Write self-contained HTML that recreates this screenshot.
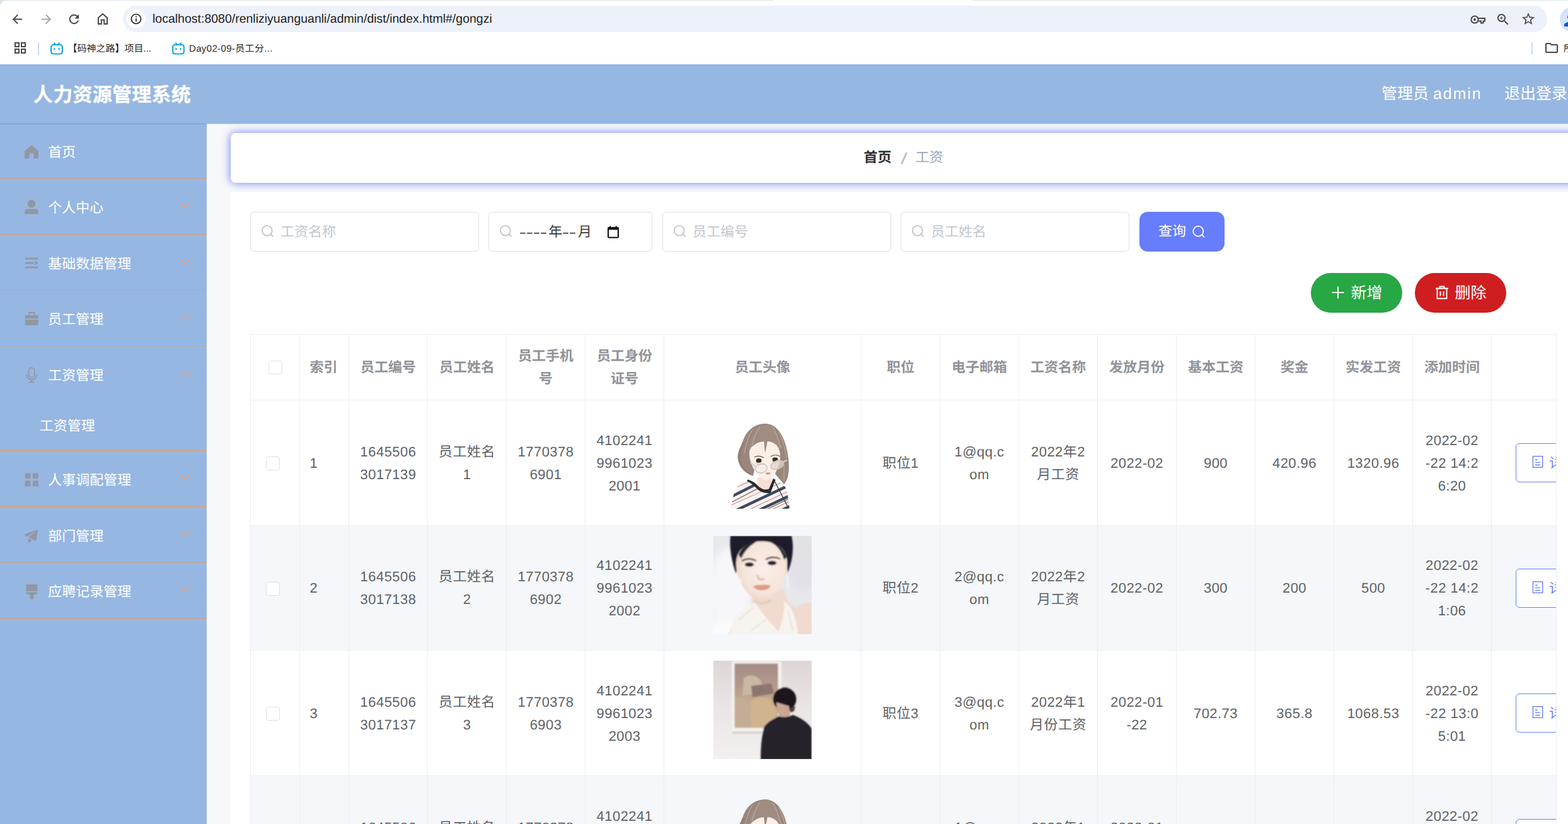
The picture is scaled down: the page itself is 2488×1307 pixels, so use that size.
<!DOCTYPE html>
<html lang="zh">
<head>
<meta charset="utf-8">
<title>人力资源管理系统</title>
<style>
*{box-sizing:border-box;margin:0;padding:0}
html,body{width:2488px;height:1307px;overflow:hidden;background:#fff}
body{position:relative;font-family:"Liberation Sans","Noto Sans CJK SC",sans-serif;color:#606266;text-rendering:geometricPrecision}
.abs{position:absolute}
.nw{white-space:nowrap}
/* ---------- browser chrome ---------- */
#chrome{position:absolute;left:0;top:0;width:2488px;height:102px;background:#dde2e9}
#chrome .tl1{position:absolute;left:0;top:1px;width:2488px;height:101px;background:#fff;border-top-left-radius:10px}
#chrome .tl2{position:absolute;left:1228px;top:0;width:315px;height:2px;background:#fff}
#omni{position:absolute;left:195px;top:9px;width:2260px;height:42px;border-radius:21px;background:#edf1fa}
#omni .ic{position:absolute;left:6px;top:6px;width:30px;height:30px;border-radius:15px;background:#fff}
#url{position:absolute;left:242px;top:18px;font-size:19.5px;line-height:24px;color:#1f1f1f;white-space:nowrap}
.bm{position:absolute;top:68px;font-size:15px;line-height:20px;color:#1f1f1f;white-space:nowrap}
/* ---------- app header ---------- */
#hdr{position:absolute;left:0;top:102px;width:2488px;height:94px;background:#96b7e2}
#hdr .title{position:absolute;left:53px;top:29px;font-size:31px;line-height:40px;font-weight:bold;color:#fff;white-space:nowrap;letter-spacing:0.25px;-webkit-text-stroke:0.3px #fff}
#hdr .user{position:absolute;left:2192px;top:28px;font-size:25px;line-height:38px;color:#fff;white-space:nowrap}
#hdr .out{position:absolute;left:2387px;top:28px;font-size:25px;line-height:38px;color:#fff;white-space:nowrap}
/* ---------- sidebar ---------- */
#side{position:absolute;left:0;top:196px;width:328px;height:1111px;background:#96b7e2;border-top:1px solid #7f98c5}
.mi{position:absolute;left:0;width:328px;height:88px;color:#fff;font-size:22px}
.mi .t{position:absolute;left:76.2px;top:30.7px;line-height:28px;white-space:nowrap}
.mi svg.i{overflow:visible;position:absolute;left:38.5px;top:32.5px;width:22px;height:22px}
.mi svg.c{position:absolute;left:285px;top:34px;width:18px;height:12px}
.ln{position:absolute;left:0;width:328px;height:1.3px;background:#f29a4c}
/* ---------- main ---------- */
#main{position:absolute;left:328px;top:196px;width:2160px;height:1111px;background:#f7f8fa;border-top:1px solid #d4d6dc}

#bc{position:absolute;left:38px;top:14px;width:2200px;height:79px;background:#fff;border-radius:8px;box-shadow:0 0 13px 1px rgba(100,115,250,.85)}
#bc .a{position:absolute;left:1004.5px;top:24.2px;font-size:22px;line-height:30px;font-weight:bold;color:#303133;white-space:nowrap}
#bc .s{position:absolute;left:1064.5px;top:25.8px;font-size:25px;line-height:30px;color:#bcc0c9;white-space:nowrap;transform:scale(1.6,1)}
#bc .b{position:absolute;left:1086.5px;top:24.2px;font-size:22px;line-height:30px;color:#97a8be;white-space:nowrap}
#card{position:absolute;left:38px;top:108px;width:2200px;height:1100px;background:#fff}
.inp{position:absolute;top:336px;height:63px;border:1.5px solid #dcdfe6;border-radius:6px;background:#fff}
.inp svg.q{position:absolute;left:15.6px;top:19.4px;width:20.6px;height:20.6px}
.inp .ph{position:absolute;left:47px;top:16px;font-size:22px;line-height:30px;color:#c3c6cd;white-space:nowrap}
.btn{position:absolute;color:#fff;white-space:nowrap}

#tb{position:absolute;left:397px;top:530px;width:2073px;height:800px;overflow:hidden;border-right:1px solid #ebeef5;border-left:1px solid #ebeef5;border-top:1px solid #ebeef5;font-size:22px;line-height:36px;color:#606266}
.tr{position:absolute;left:0;width:2200px}
.tr.s .td{background:#f5f7fa}
.td{position:absolute;top:0;height:100%;border-right:1px solid #ebeef5;border-bottom:1px solid #ebeef5;background:#fff;display:flex;align-items:center;justify-content:center;text-align:center;white-space:nowrap;letter-spacing:0.45px;padding-top:1.2px}
.th .td{font-weight:bold;color:#909399;letter-spacing:0}
.td.l{justify-content:flex-start;padding-left:15.5px}
.cb{position:absolute;width:22px;height:22px;border:1.5px solid #dcdfe6;border-radius:3.5px;background:#fff}
.av{position:absolute;left:78px;top:15.5px;width:156px;height:156.5px;overflow:hidden}
.ob{position:absolute;left:38px;width:150px;height:62px;border:1px solid #6782fb;border-radius:6px;background:#fff;color:#6782fb;letter-spacing:0}
.z{display:inline-block;white-space:nowrap;letter-spacing:inherit;font-family:"Liberation Sans","Noto Sans CJK SC",sans-serif}
</style>
</head>
<body>
<div id="chrome">
  <div class="tl1"></div><div class="tl2"></div>
  <div id="omni"><div class="ic"></div></div>

  <svg class="abs" style="left:16px;top:18.5px" width="23" height="23" viewBox="0 0 24 24"><path fill="#474747" d="M20 11H7.83l5.59-5.59L12 4l-8 8 8 8 1.41-1.41L7.83 13H20v-2z"/></svg>
  <svg class="abs" style="left:61.5px;top:18.5px" width="23" height="23" viewBox="0 0 24 24"><path fill="#a6a6a6" d="M12 4l-1.41 1.41L16.17 11H4v2h12.17l-5.58 5.59L12 20l8-8z"/></svg>
  <svg class="abs" style="left:106px;top:18.5px" width="23" height="23" viewBox="0 0 24 24"><path fill="#474747" d="M17.65 6.35C16.2 4.9 14.21 4 12 4c-4.42 0-7.99 3.58-7.99 8s3.57 8 7.99 8c3.73 0 6.84-2.55 7.73-6h-2.08c-.82 2.33-3.04 4-5.65 4-3.31 0-6-2.69-6-6s2.69-6 6-6c1.66 0 3.14.69 4.22 1.78L13 11h7V4l-2.35 2.35z"/></svg>
  <svg class="abs" style="left:151px;top:18px" width="24" height="24" viewBox="0 0 24 24"><path fill="none" stroke="#474747" stroke-width="2" stroke-linejoin="miter" d="M5 20V10.3L12 4l7 6.3V20H14.2V13.5H9.8V20Z"/></svg>
  <svg class="abs" style="left:206px;top:20px" width="20" height="20" viewBox="0 0 24 24"><path fill="#1f1f1f" d="M11 7h2v2h-2zm0 4h2v6h-2zm1-9C6.48 2 2 6.48 2 12s4.48 10 10 10 10-4.48 10-10S17.52 2 12 2zm0 18c-4.41 0-8-3.59-8-8s3.59-8 8-8 8 3.59 8 8-3.59 8-8 8z"/></svg>
  <!-- right side omnibox icons -->
  <svg class="abs" style="left:2332px;top:18.6px" width="26" height="24" viewBox="0 0 26 24"><g fill="none" stroke="#474747" stroke-width="2"><circle cx="8" cy="12" r="5.6"/><path d="M13.5 10H24V14.5H21.5V17.5H18V14.5H13.5"/></g><circle cx="8" cy="12" r="2" fill="#474747"/></svg>
  <svg class="abs" style="left:2373px;top:19.2px" width="24" height="24" viewBox="0 0 24 24"><path fill="#474747" d="M15.5 14h-.790l-.280-.270C15.41 12.59 16 11.11 16 9.5 16 5.91 13.09 3 9.5 3S3 5.91 3 9.5 5.91 16 9.5 16c1.61 0 3.09-.590 4.23-1.57l.270.28v.790l5 4.99L20.49 19l-4.99-5zm-6 0C7.01 14 5 11.990 5 9.5S7.01 5 9.5 5 14 7.01 14 9.5 11.990 14 9.500 14zm2.5-4h-2v2H9v-2H7V9h2V7h1v2h2v1z"/></svg>
  <svg class="abs" style="left:2413px;top:18.4px" width="24" height="24" viewBox="0 0 24 24"><path fill="#474747" d="M22 9.24l-7.19-.620L12 2 9.19 8.63 2 9.24l5.46 4.73L5.82 21 12 17.27 18.18 21l-1.63-7.03L22 9.24zM12 15.4l-3.76 2.27 1-4.28-3.32-2.88 4.38-.380L12 6.1l1.71 4.04 4.38.380-3.32 2.88 1 4.28L12 15.4z"/></svg>
  <div class="abs" style="left:2475px;top:11px;width:40px;height:40px;border-radius:20px;background:#d3e3fd"></div>
  <svg class="abs" style="left:2477px;top:17px" width="30" height="30" viewBox="0 0 24 24"><path fill="#0b57d0" d="M12 12c2.21 0 4-1.79 4-4s-1.79-4-4-4-4 1.79-4 4 1.79 4 4 4zm0 2c-2.67 0-8 1.34-8 4v2h16v-2c0-2.66-5.33-4-8-4z"/></svg>
  <!-- bookmarks bar -->
  <svg class="abs" style="left:23px;top:67px" width="18" height="18" viewBox="0 0 18 18"><g fill="none" stroke="#474747" stroke-width="2"><rect x="1" y="1" width="6" height="6"/><rect x="11" y="1" width="6" height="6"/><rect x="1" y="11" width="6" height="6"/><rect x="11" y="11" width="6" height="6"/></g></svg>
  <div class="abs" style="left:60px;top:67px;width:2px;height:20px;border-radius:1px;background:#c7d8f7"></div>
  <svg class="abs" style="left:80px;top:66px" width="20" height="21" viewBox="0 0 20 21"><g fill="none" stroke="#17a8e3" stroke-width="2.2" stroke-linecap="round"><rect x="1.1" y="5" width="17.8" height="14.5" rx="3.5"/><path d="M6 2.5L8 4.8M14 2.5L12 4.8"/></g><rect x="5.3" y="10" width="2.2" height="3.6" rx="1" fill="#17a8e3"/><rect x="12.5" y="10" width="2.2" height="3.6" rx="1" fill="#17a8e3"/></svg>
  <div class="bm" style="left:107.5px"><span class="z" style="width:120px">【码神之路】项目</span>...</div>
  <svg class="abs" style="left:273px;top:66px" width="20" height="21" viewBox="0 0 20 21"><g fill="none" stroke="#17a8e3" stroke-width="2.2" stroke-linecap="round"><rect x="1.1" y="5" width="17.8" height="14.5" rx="3.5"/><path d="M6 2.5L8 4.8M14 2.5L12 4.8"/></g><rect x="5.3" y="10" width="2.2" height="3.6" rx="1" fill="#17a8e3"/><rect x="12.5" y="10" width="2.2" height="3.6" rx="1" fill="#17a8e3"/></svg>
  <div class="bm" style="left:300px;letter-spacing:0.35px">Day02-09-<span class="z" style="width:46.06px">员工分</span>...</div>
  <div class="abs" style="left:2430px;top:67px;width:2px;height:20px;border-radius:1px;background:#c7d8f7"></div>
  <svg class="abs" style="left:2450px;top:64.3px" width="24" height="24" viewBox="0 0 24 24"><path fill="#474747" d="M9.17 6l2 2H20v10H4V6h5.17M10 4H4c-1.1 0-1.99.9-1.99 2L2 18c0 1.1.9 2 2 2h16c1.1 0 2-.900 2-2V8c0-1.1-.900-2-2-2h-8l-2-2z"/></svg>
  <div class="bm" style="left:2481px"><span class="z" style="width:60px">所有书签</span></div>
  <div id="url">localhost:8080/renliziyuanguanli/admin/dist/index.html#/gongzi</div>
</div>
<div id="hdr">
  <div class="title"><span class="z" style="width:250px">人力资源管理系统</span></div>
  <div class="user"><span class="z" style="width:75px">管理员</span> <span style="letter-spacing:1.9px">admin</span></div>
  <div class="out"><span class="z" style="width:100px">退出登录</span></div>
</div>
<div id="side">
  <div class="mi" style="top:0px"><svg class="i" style="top:33px" viewBox="0 0 22 22"><path fill="#9197a3" d="M11 0.3L21.8 9.2V21.5H14.3V13.2H7.7V21.5H0.2V9.2Z"/></svg><span class="t"><span class="z" style="width:44px">首页</span></span></div>
  <div class="mi" style="top:88.4px"><svg class="i" style="top:31.6px" viewBox="0 0 22 22"><circle cx="11" cy="6.3" r="6.3" fill="#9197a3"/><path fill="#9197a3" d="M0.2 22.5V19.5C0.2 16.5 2.2 14.6 5.2 14.6H16.8C19.8 14.6 21.8 16.5 21.8 19.5V22.5Z"/></svg><span class="t"><span class="z" style="width:88px">个人中心</span></span><svg class="c" viewBox="0 0 18 12"><path d="M2 2.5L9 9.5L16 2.5" fill="none" stroke="#f6a273" stroke-width="1.35"/></svg></div>
  <div class="mi" style="top:176.9px"><svg class="i" viewBox="0 0 22 22"><path fill="#9197a3" d="M0.7 2.7H21.6V5.4H0.7ZM0.7 9.7H14.6V12.4H0.7ZM0.7 16.7H21.6V19.5H0.7ZM16.4 7L21.6 10.9L16.4 14.7Z"/></svg><span class="t"><span class="z" style="width:132px">基础数据管理</span></span><svg class="c" viewBox="0 0 18 12"><path d="M2 2.5L9 9.5L16 2.5" fill="none" stroke="#f6a273" stroke-width="1.35"/></svg></div>
  <div class="mi" style="top:265px"><svg class="i" viewBox="0 0 22 22"><path fill="#9197a3" d="M5.9 0.1H16.6V5.1H21.7V10.4H0.7V5.1H5.9ZM7.7 1.9V5.1H14.8V1.9ZM0.7 11.9H21.7V21H0.7Z"/></svg><span class="t"><span class="z" style="width:88px">员工管理</span></span><svg class="c" viewBox="0 0 18 12"><path d="M2 2.5L9 9.5L16 2.5" fill="none" stroke="#f6a273" stroke-width="1.35"/></svg></div>
  <div class="mi" style="top:354.2px"><svg class="i" viewBox="0 0 22 26" style="height:26px;top:30.4px"><g fill="none" stroke="#9197a3" stroke-width="1.8" stroke-linecap="round"><rect x="6.6" y="1.3" width="9.1" height="15.4" rx="4.55"/><path d="M3.4 12.6V13a7.8 7.4 0 0 0 15.6 0V12.6M11.2 20.4V24.3M7.7 24.3H14.7"/></g></svg><span class="t"><span class="z" style="width:88px">工资管理</span></span><svg class="c" viewBox="0 0 18 12"><path d="M2 10.5L9 3.5L16 10.5" fill="none" stroke="#f6a273" stroke-width="1.35"/></svg></div>
  <div class="mi" style="top:520.1px"><svg class="i" viewBox="0 0 22 22"><path fill="#9197a3" d="M0.7 0.4H9.7V9.2H0.7ZM12.9 0.4H21.9V9.2H12.9ZM0.7 12.6H9.7V21.4H0.7ZM12.9 12.6H21.9V21.4H12.9Z"/></svg><span class="t"><span class="z" style="width:132px">人事调配管理</span></span><svg class="c" viewBox="0 0 18 12"><path d="M2 2.5L9 9.5L16 2.5" fill="none" stroke="#f6a273" stroke-width="1.35"/></svg></div>
  <div class="mi" style="top:609px"><svg class="i" viewBox="0 0 22 22"><path fill="#9197a3" d="M21.3 0.5L-0.7 8.9L3.8 11.9L19 2.2ZM21.3 0.8L6.2 12.9L18.1 19.4ZM5.7 15.1L11.4 17.8L5.9 23.2Z"/></svg><span class="t"><span class="z" style="width:88px">部门管理</span></span><svg class="c" viewBox="0 0 18 12"><path d="M2 2.5L9 9.5L16 2.5" fill="none" stroke="#f6a273" stroke-width="1.35"/></svg></div>
  <div class="mi" style="top:697.4px"><svg class="i" viewBox="0 0 22 22"><path fill="#9197a3" d="M2.5 0H20.3V10.7H2.5ZM2.5 12.2H20.3V13C20.3 15 19 16 17 16H14.3V20.5a2.9 2.9 0 0 1-5.8 0V16H5.8C3.8 16 2.5 15 2.5 13Z"/></svg><span class="t"><span class="z" style="width:132px">应聘记录管理</span></span><svg class="c" viewBox="0 0 18 12"><path d="M2 2.5L9 9.5L16 2.5" fill="none" stroke="#f6a273" stroke-width="1.35"/></svg></div>
  <div class="mi" style="top:434px"><span class="t" style="left:62.7px"><span class="z" style="width:88px">工资管理</span></span></div>
  <div class="ln" style="top:84.75px"></div>
  <div class="ln" style="top:173.85px"></div>
  <div class="ln" style="top:261.75px"></div>
  <div class="ln" style="top:350.75px"></div>
  <div class="ln" style="top:516.75px"></div>
  <div class="ln" style="top:605.95px"></div>
  <div class="ln" style="top:693.85px"></div>
  <div class="ln" style="top:782.75px"></div>
</div>
<div id="main">
  <div id="bc"><span class="a"><span class="z" style="width:44px">首页</span></span><span class="s">/</span><span class="b"><span class="z" style="width:44px">工资</span></span></div>
  <div id="card"></div>
</div>
<!-- search form (page coords) -->
<div class="inp" style="left:397px;width:363px"><svg class="q" viewBox="0 0 20 20"><g fill="none" stroke="#c0c4cc" stroke-width="1.8" stroke-linecap="round"><circle cx="9.5" cy="9.5" r="7.7"/><path d="M15.3 15.3L18.3 18.3"/></g></svg><span class="ph"><span class="z" style="width:88px">工资名称</span></span></div>
<div class="inp" style="left:775px;width:260px"><svg class="q" viewBox="0 0 20 20"><g fill="none" stroke="#c0c4cc" stroke-width="1.8" stroke-linecap="round"><circle cx="9.5" cy="9.5" r="7.7"/><path d="M15.3 15.3L18.3 18.3"/></g></svg><span class="ph" style="font-family:'Liberation Serif',serif;color:#3a3a3a;left:48px"><span style="display:inline-block;transform:scaleX(1.5);transform-origin:0 50%;margin-right:17px">----</span><span class="z" style="width:22px">年</span><span style="display:inline-block;transform:scaleX(1.5);transform-origin:0 50%;margin-right:10px">--</span><span class="z" style="width:22px">月</span></span>
  <svg class="abs" style="left:187px;top:20px" width="20" height="22" viewBox="0 0 20 22"><path fill="#111" d="M4.4 1.2H6.2V3H13.8V1.2H15.6V3H17a2 2 0 0 1 2 2V18.8a2 2 0 0 1-2 2H3a2 2 0 0 1-2-2V5a2 2 0 0 1 2-2H4.4ZM3.1 7.6V18.7H16.9V7.6Z"/></svg>
</div>
<div class="inp" style="left:1051px;width:363px"><svg class="q" viewBox="0 0 20 20"><g fill="none" stroke="#c0c4cc" stroke-width="1.8" stroke-linecap="round"><circle cx="9.5" cy="9.5" r="7.7"/><path d="M15.3 15.3L18.3 18.3"/></g></svg><span class="ph"><span class="z" style="width:88px">员工编号</span></span></div>
<div class="inp" style="left:1429px;width:363px"><svg class="q" viewBox="0 0 20 20"><g fill="none" stroke="#c0c4cc" stroke-width="1.8" stroke-linecap="round"><circle cx="9.5" cy="9.5" r="7.7"/><path d="M15.3 15.3L18.3 18.3"/></g></svg><span class="ph"><span class="z" style="width:88px">员工姓名</span></span></div>
<div class="btn" style="left:1808px;top:336px;width:135px;height:63px;border-radius:13px;background:#667dfd">
  <span class="abs" style="left:30px;top:16px;font-size:22px;line-height:30px"><span class="z" style="width:44px">查询</span></span>
  <svg class="abs" style="left:82.5px;top:19.5px" width="22.5" height="22.5" viewBox="0 0 24 24"><g fill="none" stroke="#fff" stroke-width="1.9" stroke-linecap="round"><circle cx="11" cy="11.5" r="8.6"/><path d="M17.5 18L20.8 21.3"/></g></svg>
</div>
<div class="btn" style="left:2080px;top:433px;width:145px;height:63px;border-radius:32px;background:#28a745">
  <svg class="abs" style="left:32px;top:20px" width="22" height="22" viewBox="0 0 22 22"><path d="M11 1.5V20.5M1.5 11H20.5" stroke="#fff" stroke-width="1.9" fill="none"/></svg>
  <span class="abs" style="left:63.5px;top:14.7px;font-size:25px;line-height:34px"><span class="z" style="width:50px">新增</span></span>
</div>
<div class="btn" style="left:2245px;top:433px;width:145px;height:63px;border-radius:32px;background:#cf1e20">
  <svg class="abs" style="left:31px;top:19px" width="24" height="24" viewBox="0 0 24 24"><g fill="none" stroke="#fff" stroke-width="1.9"><path d="M2 5.5H22M8.5 5V2.5H15.5V5M4.5 5.5V21.5H19.5V5.5M9.5 10V17.5M14.5 10V17.5"/></g></svg>
  <span class="abs" style="left:63.5px;top:14.7px;font-size:25px;line-height:34px"><span class="z" style="width:50px">删除</span></span>
</div>
<div id="tb">
<div class="tr th" style="top:0;height:104px"><div class="td" style="left:0px;width:78px"><div class="ci"><span class="cb" style="left:28px;top:41px"></span></div></div><div class="td l" style="left:78px;width:78px"><div class="ci"><span class="z" style="width:44px">索引</span></div></div><div class="td" style="left:156px;width:125px"><div class="ci"><span class="z" style="width:88px">员工编号</span></div></div><div class="td" style="left:281px;width:125px"><div class="ci"><span class="z" style="width:88px">员工姓名</span></div></div><div class="td" style="left:406px;width:125px"><div class="ci"><span class="z" style="width:88px">员工手机</span><br><span class="z" style="width:22px">号</span></div></div><div class="td" style="left:531px;width:125px"><div class="ci"><span class="z" style="width:88px">员工身份</span><br><span class="z" style="width:44px">证号</span></div></div><div class="td" style="left:656px;width:313px"><div class="ci"><span class="z" style="width:88px">员工头像</span></div></div><div class="td" style="left:969px;width:125px"><div class="ci"><span class="z" style="width:44px">职位</span></div></div><div class="td" style="left:1094px;width:125px"><div class="ci"><span class="z" style="width:88px">电子邮箱</span></div></div><div class="td" style="left:1219px;width:125px"><div class="ci"><span class="z" style="width:88px">工资名称</span></div></div><div class="td" style="left:1344px;width:125px"><div class="ci"><span class="z" style="width:88px">发放月份</span></div></div><div class="td" style="left:1469px;width:125px"><div class="ci"><span class="z" style="width:88px">基本工资</span></div></div><div class="td" style="left:1594px;width:125px"><div class="ci"><span class="z" style="width:44px">奖金</span></div></div><div class="td" style="left:1719px;width:125px"><div class="ci"><span class="z" style="width:88px">实发工资</span></div></div><div class="td" style="left:1844px;width:125px"><div class="ci"><span class="z" style="width:88px">添加时间</span></div></div><div class="td" style="left:1969px;width:234px"><div class="ci"></div></div></div>
<div class="tr" style="top:104px;height:199px"><div class="td" style="left:0px;width:78px"><div class="ci"><span class="cb" style="left:24px;top:89px"></span></div></div><div class="td l" style="left:78px;width:78px"><div class="ci">1</div></div><div class="td" style="left:156px;width:125px"><div class="ci">1645506<br>3017139</div></div><div class="td" style="left:281px;width:125px"><div class="ci"><span class="z" style="width:89.81px">员工姓名</span><br>1</div></div><div class="td" style="left:406px;width:125px"><div class="ci">1770378<br>6901</div></div><div class="td" style="left:531px;width:125px"><div class="ci">4102241<br>9961023<br>2001</div></div><div class="td" style="left:656px;width:313px"><div class="ci"><div class="av"><svg width="156" height="157" viewBox="0 0 156 157"><defs><filter id="b1" x="-10%" y="-10%" width="120%" height="120%"><feGaussianBlur stdDeviation="0.55"/></filter><clipPath id="sh1"><path d="M56 110C44 113 37 120 33 130L27 157H121L117 128C115 120 108 114 96 111L88 125L70 122Z"/></clipPath></defs><g filter="url(#b1)"><path d="M84 21C68 20 53 30 47 48C42 60 37 68 39 78C41 90 50 100 63 104L72 62L100 54L105 72L98 101L112 117C119 110 121 94 119 76C116 50 106 23 84 21Z" fill="#9b867c"/><path d="M70 106L69 122L88 127L94 108Z" fill="#f8ded3"/><path d="M57 68C57 58 66 50 82 49C96 48 105 56 106 70C107 84 100 100 90 109C86 111.5 82 111 78 108.5C66 100 57 84 57 68Z" fill="#fcefe7"/><path d="M84 21C70 24 58 40 55 64C60 57 70 50 80 48L82 68L86 48C94 49 102 54 107 64C105 40 96 24 84 21Z" fill="#a18c82"/><path d="M62 30C56 40 52 52 49 68M74 25C68 34 64 44 61 56M94 26C100 36 104 48 107 60M104 34C110 46 114 60 116 76M112 84L112 112" stroke="#bba99f" stroke-width="1.3" fill="none"/><path d="M48 52C44 62 40 70 42 80C44 90 52 98 60 101" stroke="#86726a" stroke-width="1.2" fill="none"/><ellipse cx="72" cy="79.5" rx="4.4" ry="3.5" fill="#3a2f22"/><ellipse cx="98" cy="78" rx="4.4" ry="3.5" fill="#3a2f22"/><path d="M65 74C70 71.5 75 72 80 75M91 73C96 70 101 70 106 73" stroke="#5d4c44" stroke-width="1.1" fill="none"/><path d="M68 84C72 86 76 86 80 84M94 82C98 84 102 83 105 81" stroke="#f0c4be" stroke-width="2.5" fill="none"/><ellipse cx="76" cy="92" rx="9.5" ry="7" fill="#f4ece8" fill-opacity=".75" stroke="#cdc7c4" stroke-width="1.6" transform="rotate(-10 76 92)"/><ellipse cx="101" cy="86.5" rx="10.5" ry="6.5" fill="#e4d3cd" fill-opacity=".75" stroke="#cdc7c4" stroke-width="1.6" transform="rotate(-20 101 86.5)"/><path d="M59 83L67 89M110 82L117 79" stroke="#d6d0cd" stroke-width="2.2"/><path d="M82 99.5C85 98 88 98 91 99C89 102.5 85 103 82 99.5Z" fill="#e58f8c"/><g clip-path="url(#sh1)"><rect x="20" y="105" width="110" height="55" fill="#f8f4f2"/><g stroke="#40475f" stroke-width="4.4" fill="none"><path d="M20 141L76 113M24 164L128 115M60 164L130 131M96 164L130 148"/></g><g stroke="#c98b8b" stroke-width="1.1" fill="none"><path d="M20 129L66 109M22 153L120 109M44 163L130 123M80 163L130 140"/></g><g stroke="#8a7466" stroke-width="1.5" fill="none"><path d="M26 147L80 119M64 167L130 135"/></g></g><path d="M55 109.5C62 112 68 116 72 121C78 125.5 84 126.5 88 124.5L95 108L98.5 110L90.5 131C82 132 74 129 70 125C64 119 58 114 53 112Z" fill="#2b2a2e"/><path d="M97 112L118 153" stroke="#3a3436" stroke-width="1.3"/></g></svg></div></div></div><div class="td" style="left:969px;width:125px"><div class="ci"><span class="z" style="width:44.91px">职位</span>1</div></div><div class="td" style="left:1094px;width:125px"><div class="ci">1@qq.c<br>om</div></div><div class="td" style="left:1219px;width:125px"><div class="ci">2022<span class="z" style="width:22.45px">年</span>2<br><span class="z" style="width:67.36px">月工资</span></div></div><div class="td" style="left:1344px;width:125px"><div class="ci">2022-02</div></div><div class="td" style="left:1469px;width:125px"><div class="ci">900</div></div><div class="td" style="left:1594px;width:125px"><div class="ci">420.96</div></div><div class="td" style="left:1719px;width:125px"><div class="ci">1320.96</div></div><div class="td" style="left:1844px;width:125px"><div class="ci">2022-02<br>-22 14:2<br>6:20</div></div><div class="td" style="left:1969px;width:234px"><div class="ci"><div class="ob" style="top:68px"><svg class="abs" style="left:24px;top:19px" width="20" height="22" viewBox="0 0 20 22"><g fill="none" stroke="#6782fb" stroke-width="1.4"><rect x="2.4" y="0.7" width="15.3" height="17.6"/><path d="M6 6.2H9.7M6 10.4H14M6 14.5H14"/></g></svg><span class="abs" style="left:52px;top:13px"><span class="z" style="width:44px">详情</span></span></div></div></div></div>
<div class="tr s" style="top:303px;height:198px"><div class="td" style="left:0px;width:78px"><div class="ci"><span class="cb" style="left:24px;top:89px"></span></div></div><div class="td l" style="left:78px;width:78px"><div class="ci">2</div></div><div class="td" style="left:156px;width:125px"><div class="ci">1645506<br>3017138</div></div><div class="td" style="left:281px;width:125px"><div class="ci"><span class="z" style="width:89.81px">员工姓名</span><br>2</div></div><div class="td" style="left:406px;width:125px"><div class="ci">1770378<br>6902</div></div><div class="td" style="left:531px;width:125px"><div class="ci">4102241<br>9961023<br>2002</div></div><div class="td" style="left:656px;width:313px"><div class="ci"><div class="av"><svg width="156" height="157" viewBox="0 0 156 157"><defs><filter id="b2" x="-10%" y="-10%" width="120%" height="120%"><feGaussianBlur stdDeviation="1"/></filter><filter id="b2b" x="-30%" y="-30%" width="160%" height="160%"><feGaussianBlur stdDeviation="6"/></filter><radialGradient id="f2" cx=".55" cy=".45" r=".6"><stop offset="0" stop-color="#fbefe8"/><stop offset=".7" stop-color="#f6e4da"/><stop offset="1" stop-color="#e9cfc2"/></radialGradient></defs><rect width="156" height="157" fill="#e8e8ed"/><g filter="url(#b2b)"><ellipse cx="26" cy="90" rx="34" ry="72" fill="#f7f7fb"/><ellipse cx="142" cy="40" rx="26" ry="50" fill="#e1e1e7"/><ellipse cx="20" cy="150" rx="40" ry="14" fill="#fbfbfd"/></g><g filter="url(#b2)"><path d="M27 0H124C127 12 127 30 122 46L118 58L112 24L44 22L36 60C29 42 25 18 27 0Z" fill="#1e1b2b"/><path d="M62 92L60 112L44 124L30 140L24 157H156V107C146 105 138 107 132 114L118 106L112 84Z" fill="#f1dbd0"/><path d="M36 44C36 24 50 9 76 8.5C102 8 117 22 117 44C117 68 104 90 88 102C82 106 74 106 68 102C50 90 36 68 36 44Z" fill="url(#f2)"/><path d="M40 30C44 18 56 9 70 8C60 14 50 22 44 36ZM116 34C112 20 100 10 86 8C98 12 108 22 112 38Z" fill="#2a2536"/><path d="M45 40C52 35.5 60 35.5 68 39.5M83 37.5C90 33 99 33 106 36.5" stroke="#4f3f3b" stroke-width="2.4" fill="none"/><ellipse cx="57" cy="45.5" rx="7.2" ry="3.5" fill="#2b2230"/><ellipse cx="93" cy="43" rx="7.2" ry="3.5" fill="#2b2230"/><path d="M70 62C70 68.5 75 71 81 68" stroke="#dcbcab" stroke-width="3" fill="none"/><path d="M63 80C71 77 83 77 91 79C87 88 69 89 63 80Z" fill="#dd9c86"/><path d="M64 103C72 108.5 84 108.5 92 101" stroke="#e6cabc" stroke-width="3.5" fill="none"/><path d="M32 132C42 118 54 108 66 106C74 118 90 138 108 157H26Z" fill="#f7f4ef"/><path d="M112 104C124 112 132 128 134 157H100C110 138 114 120 112 104Z" fill="#f7f4ef"/><path d="M40 134L64 112M60 150L84 132M118 118L126 150" stroke="#e6e0d8" stroke-width="2" fill="none"/><path d="M43 68L45 88M117 62L118.5 84" stroke="#f6f6f8" stroke-width="2.4"/></g></svg></div></div></div><div class="td" style="left:969px;width:125px"><div class="ci"><span class="z" style="width:44.91px">职位</span>2</div></div><div class="td" style="left:1094px;width:125px"><div class="ci">2@qq.c<br>om</div></div><div class="td" style="left:1219px;width:125px"><div class="ci">2022<span class="z" style="width:22.45px">年</span>2<br><span class="z" style="width:67.36px">月工资</span></div></div><div class="td" style="left:1344px;width:125px"><div class="ci">2022-02</div></div><div class="td" style="left:1469px;width:125px"><div class="ci">300</div></div><div class="td" style="left:1594px;width:125px"><div class="ci">200</div></div><div class="td" style="left:1719px;width:125px"><div class="ci">500</div></div><div class="td" style="left:1844px;width:125px"><div class="ci">2022-02<br>-22 14:2<br>1:06</div></div><div class="td" style="left:1969px;width:234px"><div class="ci"><div class="ob" style="top:68px"><svg class="abs" style="left:24px;top:19px" width="20" height="22" viewBox="0 0 20 22"><g fill="none" stroke="#6782fb" stroke-width="1.4"><rect x="2.4" y="0.7" width="15.3" height="17.6"/><path d="M6 6.2H9.7M6 10.4H14M6 14.5H14"/></g></svg><span class="abs" style="left:52px;top:13px"><span class="z" style="width:44px">详情</span></span></div></div></div></div>
<div class="tr" style="top:501px;height:199px"><div class="td" style="left:0px;width:78px"><div class="ci"><span class="cb" style="left:24px;top:89px"></span></div></div><div class="td l" style="left:78px;width:78px"><div class="ci">3</div></div><div class="td" style="left:156px;width:125px"><div class="ci">1645506<br>3017137</div></div><div class="td" style="left:281px;width:125px"><div class="ci"><span class="z" style="width:89.81px">员工姓名</span><br>3</div></div><div class="td" style="left:406px;width:125px"><div class="ci">1770378<br>6903</div></div><div class="td" style="left:531px;width:125px"><div class="ci">4102241<br>9961023<br>2003</div></div><div class="td" style="left:656px;width:313px"><div class="ci"><div class="av"><svg width="156" height="157" viewBox="0 0 156 157"><defs><filter id="b3" x="-10%" y="-10%" width="120%" height="120%"><feGaussianBlur stdDeviation="1"/></filter><linearGradient id="w3" x1="0" y1="0" x2="0" y2="1"><stop offset="0" stop-color="#ddd6d5"/><stop offset=".5" stop-color="#ebe6e6"/><stop offset="1" stop-color="#f3f0f0"/></linearGradient><linearGradient id="p3" x1="0" y1="0" x2="0" y2="1"><stop offset="0" stop-color="#a58c86"/><stop offset=".35" stop-color="#b39a8c"/><stop offset=".6" stop-color="#c6aa8c"/><stop offset="1" stop-color="#cdb494"/></linearGradient></defs><rect width="156" height="157" fill="url(#w3)"/><g filter="url(#b3)"><rect x="29" y="1" width="79" height="114" fill="#f4f2f1"/><rect x="30" y="112" width="78" height="4" fill="#d9d4d2"/><rect x="33.5" y="4.5" width="69" height="102" fill="url(#p3)"/><path d="M48 28C56 20 70 22 76 34L80 50L46 56Z" fill="#c9b8a2"/><path d="M60 40L92 36L96 52L62 58Z" fill="#8f7470"/><path d="M60 62C70 56 88 58 98 66L100 106H60Z" fill="#d0b48e"/><path d="M34 60C44 56 54 62 58 76L60 106H34Z" fill="#c4ad96"/><circle cx="113" cy="61" r="18.5" fill="#1d191d"/><path d="M100 66C100 76 102 84 106 90L122 88L120 72Z" fill="#caa695"/><path d="M104 88C96 92 84 98 80 106C76 124 75 140 75 157H156V108C150 98 138 90 126 86C118 90 110 90 104 88Z" fill="#25222a"/><path d="M120 76L130 72L128 80L122 82Z" fill="#4a4038"/></g></svg></div></div></div><div class="td" style="left:969px;width:125px"><div class="ci"><span class="z" style="width:44.91px">职位</span>3</div></div><div class="td" style="left:1094px;width:125px"><div class="ci">3@qq.c<br>om</div></div><div class="td" style="left:1219px;width:125px"><div class="ci">2022<span class="z" style="width:22.45px">年</span>1<br><span class="z" style="width:89.81px">月份工资</span></div></div><div class="td" style="left:1344px;width:125px"><div class="ci">2022-01<br>-22</div></div><div class="td" style="left:1469px;width:125px"><div class="ci">702.73</div></div><div class="td" style="left:1594px;width:125px"><div class="ci">365.8</div></div><div class="td" style="left:1719px;width:125px"><div class="ci">1068.53</div></div><div class="td" style="left:1844px;width:125px"><div class="ci">2022-02<br>-22 13:0<br>5:01</div></div><div class="td" style="left:1969px;width:234px"><div class="ci"><div class="ob" style="top:68px"><svg class="abs" style="left:24px;top:19px" width="20" height="22" viewBox="0 0 20 22"><g fill="none" stroke="#6782fb" stroke-width="1.4"><rect x="2.4" y="0.7" width="15.3" height="17.6"/><path d="M6 6.2H9.7M6 10.4H14M6 14.5H14"/></g></svg><span class="abs" style="left:52px;top:13px"><span class="z" style="width:44px">详情</span></span></div></div></div></div>
<div class="tr s" style="top:700px;height:199px"><div class="td" style="left:0px;width:78px"><div class="ci"><span class="cb" style="left:24px;top:89px"></span></div></div><div class="td l" style="left:78px;width:78px"><div class="ci">4</div></div><div class="td" style="left:156px;width:125px"><div class="ci">1645506<br>3017136</div></div><div class="td" style="left:281px;width:125px"><div class="ci"><span class="z" style="width:89.81px">员工姓名</span><br>1</div></div><div class="td" style="left:406px;width:125px"><div class="ci">1770378<br>6901</div></div><div class="td" style="left:531px;width:125px"><div class="ci">4102241<br>9961023<br>2001</div></div><div class="td" style="left:656px;width:313px"><div class="ci"><div class="av"><svg width="156" height="157" viewBox="0 0 156 157"><defs><filter id="b1b" x="-10%" y="-10%" width="120%" height="120%"><feGaussianBlur stdDeviation="0.55"/></filter><clipPath id="sh1b"><path d="M56 110C44 113 37 120 33 130L27 157H121L117 128C115 120 108 114 96 111L88 125L70 122Z"/></clipPath></defs><g filter="url(#b1b)"><path d="M84 21C68 20 53 30 47 48C42 60 37 68 39 78C41 90 50 100 63 104L72 62L100 54L105 72L98 101L112 117C119 110 121 94 119 76C116 50 106 23 84 21Z" fill="#9b867c"/><path d="M70 106L69 122L88 127L94 108Z" fill="#f8ded3"/><path d="M57 68C57 58 66 50 82 49C96 48 105 56 106 70C107 84 100 100 90 109C86 111.5 82 111 78 108.5C66 100 57 84 57 68Z" fill="#fcefe7"/><path d="M84 21C70 24 58 40 55 64C60 57 70 50 80 48L82 68L86 48C94 49 102 54 107 64C105 40 96 24 84 21Z" fill="#a18c82"/><path d="M62 30C56 40 52 52 49 68M74 25C68 34 64 44 61 56M94 26C100 36 104 48 107 60M104 34C110 46 114 60 116 76M112 84L112 112" stroke="#bba99f" stroke-width="1.3" fill="none"/><path d="M48 52C44 62 40 70 42 80C44 90 52 98 60 101" stroke="#86726a" stroke-width="1.2" fill="none"/><ellipse cx="72" cy="79.5" rx="4.4" ry="3.5" fill="#3a2f22"/><ellipse cx="98" cy="78" rx="4.4" ry="3.5" fill="#3a2f22"/><path d="M65 74C70 71.5 75 72 80 75M91 73C96 70 101 70 106 73" stroke="#5d4c44" stroke-width="1.1" fill="none"/><path d="M68 84C72 86 76 86 80 84M94 82C98 84 102 83 105 81" stroke="#f0c4be" stroke-width="2.5" fill="none"/><ellipse cx="76" cy="92" rx="9.5" ry="7" fill="#f4ece8" fill-opacity=".75" stroke="#cdc7c4" stroke-width="1.6" transform="rotate(-10 76 92)"/><ellipse cx="101" cy="86.5" rx="10.5" ry="6.5" fill="#e4d3cd" fill-opacity=".75" stroke="#cdc7c4" stroke-width="1.6" transform="rotate(-20 101 86.5)"/><path d="M59 83L67 89M110 82L117 79" stroke="#d6d0cd" stroke-width="2.2"/><path d="M82 99.5C85 98 88 98 91 99C89 102.5 85 103 82 99.5Z" fill="#e58f8c"/><g clip-path="url(#sh1b)"><rect x="20" y="105" width="110" height="55" fill="#f8f4f2"/><g stroke="#40475f" stroke-width="4.4" fill="none"><path d="M20 141L76 113M24 164L128 115M60 164L130 131M96 164L130 148"/></g><g stroke="#c98b8b" stroke-width="1.1" fill="none"><path d="M20 129L66 109M22 153L120 109M44 163L130 123M80 163L130 140"/></g><g stroke="#8a7466" stroke-width="1.5" fill="none"><path d="M26 147L80 119M64 167L130 135"/></g></g><path d="M55 109.5C62 112 68 116 72 121C78 125.5 84 126.5 88 124.5L95 108L98.5 110L90.5 131C82 132 74 129 70 125C64 119 58 114 53 112Z" fill="#2b2a2e"/><path d="M97 112L118 153" stroke="#3a3436" stroke-width="1.3"/></g></svg></div></div></div><div class="td" style="left:969px;width:125px"><div class="ci"><span class="z" style="width:44.91px">职位</span>1</div></div><div class="td" style="left:1094px;width:125px"><div class="ci">1@qq.c<br>om</div></div><div class="td" style="left:1219px;width:125px"><div class="ci">2022<span class="z" style="width:22.45px">年</span>1<br><span class="z" style="width:89.81px">月份工资</span></div></div><div class="td" style="left:1344px;width:125px"><div class="ci">2022-01<br>-22</div></div><div class="td" style="left:1469px;width:125px"><div class="ci">900</div></div><div class="td" style="left:1594px;width:125px"><div class="ci">420.96</div></div><div class="td" style="left:1719px;width:125px"><div class="ci">1320.96</div></div><div class="td" style="left:1844px;width:125px"><div class="ci">2022-02<br>-22 13:0<br>0:51</div></div><div class="td" style="left:1969px;width:234px"><div class="ci"><div class="ob" style="top:68px"><svg class="abs" style="left:24px;top:19px" width="20" height="22" viewBox="0 0 20 22"><g fill="none" stroke="#6782fb" stroke-width="1.4"><rect x="2.4" y="0.7" width="15.3" height="17.6"/><path d="M6 6.2H9.7M6 10.4H14M6 14.5H14"/></g></svg><span class="abs" style="left:52px;top:13px"><span class="z" style="width:44px">详情</span></span></div></div></div></div>
<!--/TB--></div>

</body>
</html>
